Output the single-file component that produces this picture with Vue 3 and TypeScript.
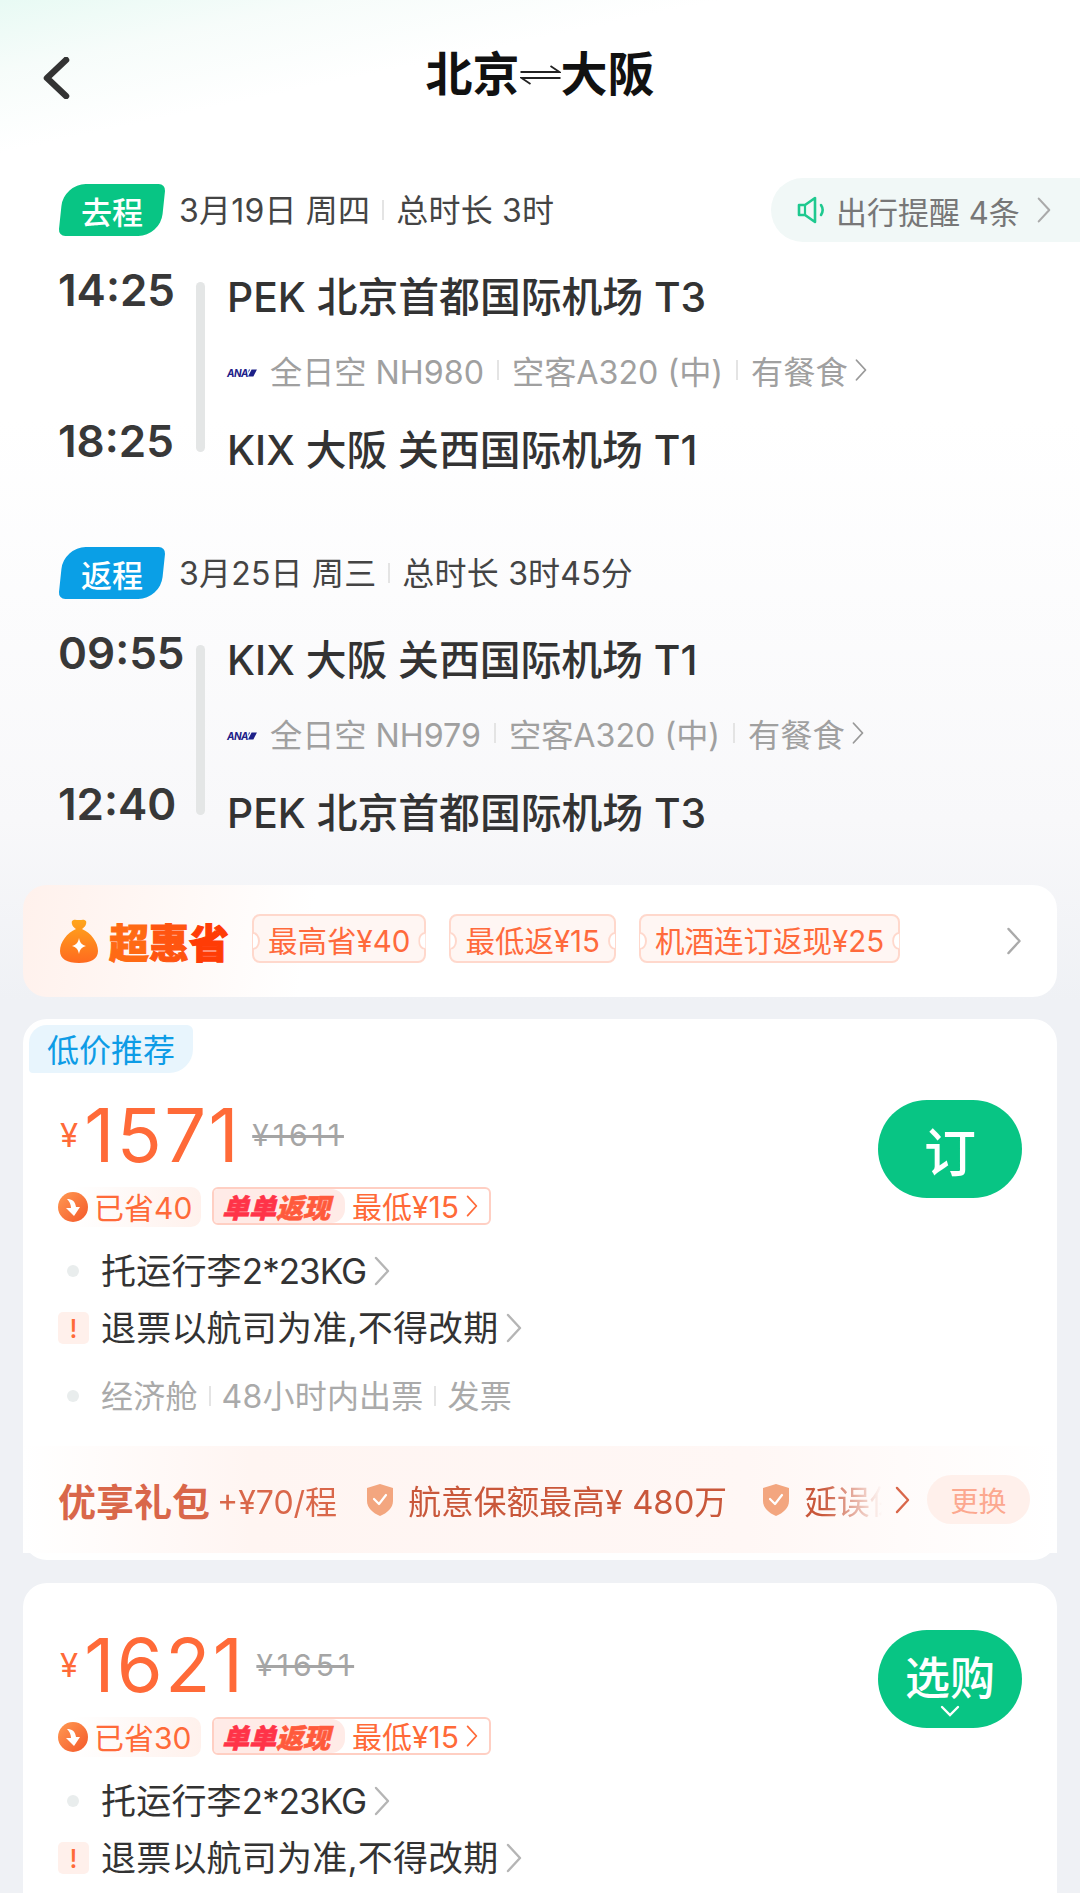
<script setup lang="ts">
interface Trip {
  tag: string;
  tone: string;
  date: string;
  total: string;
  depart: string;
  arrive: string;
  from: string;
  to: string;
  flight: string;
}

interface Offer {
  price: string;
  origin: string;
  saved: string;
  low: boolean;
  action: string;
}

const trips: Trip[] = [
  {
    tag: "去程",
    tone: "green",
    date: "3月19日 周四",
    total: "总时长 3时",
    depart: "14:25",
    arrive: "18:25",
    from: "PEK 北京首都国际机场 T3",
    to: "KIX 大阪 关西国际机场 T1",
    flight: "全日空 NH980",
  },
  {
    tag: "返程",
    tone: "blue",
    date: "3月25日 周三",
    total: "总时长 3时45分",
    depart: "09:55",
    arrive: "12:40",
    from: "KIX 大阪 关西国际机场 T1",
    to: "PEK 北京首都国际机场 T3",
    flight: "全日空 NH979",
  },
];

const offers: Offer[] = [
  { price: "1571", origin: "1611", saved: "已省40", low: true, action: "订" },
  { price: "1621", origin: "1651", saved: "已省30", low: false, action: "选购" },
];

const tickets = ["最高省¥40", "最低返¥15", "机酒连订返现¥25"];
</script>

<template>
  <div class="page">
    <svg class="defs" width="0" height="0" aria-hidden="true">
      <symbol id="chev" viewBox="0 0 16 30">
        <path d="M2 2l12 13L2 28" fill="none" stroke="currentColor" stroke-width="2.4" stroke-linecap="round" stroke-linejoin="round" />
      </symbol>
      <symbol id="shield" viewBox="0 0 28 34">
        <path d="M14 1l13 4v13c0 7-6 12-13 15C7 30 1 25 1 18V5z" fill="#f3a67f" />
        <path d="M8 16l5 5 7-9" fill="none" stroke="#fff" stroke-width="2.2" stroke-linecap="round" stroke-linejoin="round" />
      </symbol>
    </svg>

    <header class="nav">
      <svg class="back" viewBox="0 0 28 42" width="28" height="42">
        <path d="M24 3L5 21l19 18" fill="none" stroke="#333" stroke-width="6.5" stroke-linecap="round" stroke-linejoin="round" />
      </svg>
      <h1 class="title">
        北京<svg viewBox="0 0 40 20" width="41" height="20">
          <path d="M0 7h39L30 1M40 13H1l9 6" fill="none" stroke="#222" stroke-width="1.8" />
        </svg>大阪
      </h1>
    </header>

    <section v-for="(t, i) in trips" :key="t.tag" class="trip" :class="{ first: i === 0 }">
      <div class="trip-head">
        <span class="trip-tag" :class="t.tone"><b>{{ t.tag }}</b></span>
        <span class="trip-date">{{ t.date }}</span>
        <i class="sep" />
        <span class="trip-date">{{ t.total }}</span>
        <div v-if="i === 0" class="remind">
          <svg viewBox="0 0 30 30" width="30" height="30">
            <path d="M2 10h6l10-7v24l-10-7H2z" fill="none" stroke="#1ec98f" stroke-width="2.6" stroke-linejoin="round" />
            <path d="M8 10v10" stroke="#1ec98f" stroke-width="2.2" />
            <path d="M24 10c2 3 2 7 0 10" fill="none" stroke="#1ec98f" stroke-width="2.6" stroke-linecap="round" />
          </svg>
          <span>出行提醒 4条</span>
          <svg class="remind-chev"><use href="#chev" /></svg>
        </div>
      </div>
      <div class="trip-body">
        <div class="times">
          <span>{{ t.depart }}</span>
          <span>{{ t.arrive }}</span>
        </div>
        <div class="bar" />
        <div class="stops">
          <div class="stop">{{ t.from }}</div>
          <div class="flight">
            <span class="ana">
              <em>ANA</em>
              <svg viewBox="0 0 10 10" width="10" height="10">
                <path d="M4 1h6L6 9H0zM1 1h1.500L0 5z" fill="#1d2088" />
              </svg>
            </span>
            <span>{{ t.flight }}</span>
            <i class="sep" />
            <span>空客A320 (中)</span>
            <i class="sep" />
            <span>有餐食</span>
            <svg class="flight-chev"><use href="#chev" /></svg>
          </div>
          <div class="stop">{{ t.to }}</div>
        </div>
      </div>
    </section>

    <section class="promo">
      <svg viewBox="0 0 38 44" width="38" height="44">
        <defs>
          <linearGradient id="bag" x1="0.5" y1="0" x2="0.5" y2="1">
            <stop offset="0" stop-color="#ffa61c" />
            <stop offset="1" stop-color="#ff6a1f" />
          </linearGradient>
        </defs>
        <path d="M12 2c2-2 4-1 7-1s5-1 7 1c1 3-1 6-4 8 9 4 16 13 16 22 0 8-7 12-19 12S0 40 0 32c0-9 7-18 16-22-3-2-5-5-4-8z" fill="url(#bag)" />
        <path d="M19 19c1 5 3 7 7 8-4 1-6 3-7 8-1-5-3-7-7-8 4-1 6-3 7-8z" fill="#fff" />
      </svg>
      <strong class="promo-name"><span>超</span><span>惠</span><span>省</span></strong>
      <div class="tickets">
        <span v-for="n in tickets" :key="n" class="ticket">{{ n }}</span>
      </div>
      <svg class="promo-chev"><use href="#chev" /></svg>
    </section>

    <article v-for="o in offers" :key="o.price" class="offer" :class="{ tagged: o.low }">
      <span v-if="o.low" class="low-tag"><span>低价推荐</span></span>
      <div class="offer-top">
        <div>
          <div class="price">
            <span class="yen">¥</span>
            <span class="num">{{ o.price }}</span>
            <s class="origin">¥{{ o.origin }}</s>
          </div>
          <div class="badges">
            <span class="saved">
              <svg viewBox="0 0 30 30" width="30" height="30">
                <defs>
                  <linearGradient id="sv" x1="0" y1="0" x2="1" y2="1">
                    <stop offset="0" stop-color="#ff9a52" />
                    <stop offset="1" stop-color="#f4582a" />
                  </linearGradient>
                </defs>
                <circle cx="15" cy="15" r="15" fill="url(#sv)" />
                <path d="M9 7c5 0 8 2 9 8h4l-6 9-8-8h5c0-4-2-7-4-9z" fill="#fff" />
              </svg>
              <span class="saved-text">{{ o.saved }}</span>
            </span>
            <span class="cash">
              <b class="cash-name"><span>单单</span><span>返现</span></b>
              <span class="cash-val">最低¥15</span>
              <svg class="cash-chev"><use href="#chev" /></svg>
            </span>
          </div>
        </div>
        <button class="buy" :class="{ wide: !o.low }" type="button">
          <span>{{ o.action }}</span>
          <svg v-if="!o.low" viewBox="0 0 20 12" width="20" height="12">
            <path d="M2 2l8 8 8-8" fill="none" stroke="#fff" stroke-width="2.4" stroke-linecap="round" />
          </svg>
        </button>
      </div>

      <div class="rule first-rule">
        <i class="dot" />
        <span>托运行李<span class="kg">2*23KG</span></span>
        <svg class="rule-chev"><use href="#chev" /></svg>
      </div>
      <div class="rule warn">
        <i class="mark">!</i>
        <span>退票以航司为准,不得改期</span>
        <svg class="rule-chev"><use href="#chev" /></svg>
      </div>

      <template v-if="o.low">
        <div class="rule gray">
          <i class="dot" />
          <span>经济舱</span>
          <i class="sep" />
          <span>48小时内出票</span>
          <i class="sep" />
          <span>发票</span>
        </div>
        <div class="gift">
          <strong class="gift-name">优享礼包</strong>
          <div class="gift-list">
            <span class="gift-price">+¥70/程</span>
            <svg class="shield"><use href="#shield" /></svg>
            <span class="gift-item">航意保额最高¥ 480万</span>
            <svg class="shield next"><use href="#shield" /></svg>
            <span class="gift-item">延误保</span>
          </div>
          <svg class="gift-chev"><use href="#chev" /></svg>
          <span class="swap">更换</span>
        </div>
      </template>
    </article>
  </div>
</template>

<style scoped>
.page {
  width: 1080px;
  height: 1893px;
  overflow: hidden;
  font-family: Inter, "Noto Sans CJK SC", sans-serif;
  color: #333;
  background:
    linear-gradient(168deg, #e8faf4 0, rgba(243, 251, 248, 0.7) 70px, rgba(255, 255, 255, 0) 150px),
    linear-gradient(180deg, #fff 420px, #f8f8fa 820px, #eff1f5 1000px);
}

.defs {
  position: absolute;
}

.sep {
  display: block;
  width: 2px;
  height: 20px;
  background: #e4e4e4;
  flex-shrink: 0;
}

/* nav */
.nav {
  display: flex;
  align-items: center;
  justify-content: center;
  height: 148px;
  position: relative;
}

.back {
  position: absolute;
  left: 42px;
  top: 57px;
}

.title {
  margin: 0;
  font-size: 47px;
  line-height: 60px;
  font-weight: 700;
  color: #111;
  display: flex;
  align-items: center;
}

.title svg {
  margin: 2px 0 0;
}

/* trips */
.trip {
  padding-left: 58px;
  margin-bottom: 74px;
}

.trip.first {
  margin-top: 36px;
}

.trip-head {
  display: flex;
  align-items: center;
  height: 52px;
  gap: 12px;
}

.trip-tag {
  position: relative;
  width: 108px;
  height: 52px;
  margin-right: 1px;
  display: flex;
  align-items: center;
  justify-content: center;
  flex-shrink: 0;
}

.trip-tag::before {
  content: "";
  position: absolute;
  inset: 0 3px;
  border-radius: 22px 7px 22px 7px;
  transform: skewX(-6deg);
  background: #08c584;
}

.trip-tag.blue::before {
  background: #0a9fe6;
}

.trip-tag b {
  position: relative;
  font-size: 31px;
  font-weight: 500;
  color: #fff;
}

.trip-date {
  padding-bottom: 4px;
  font-size: 32px;
  letter-spacing: 0.2px;
  color: #444;
}

.remind {
  margin-left: auto;
  width: 309px;
  height: 64px;
  flex-shrink: 0;
  box-sizing: border-box;
  padding-left: 26px;
  display: flex;
  align-items: center;
  gap: 9px;
  border-radius: 32px 0 0 32px;
  background: #f1f8f7;
  font-size: 31px;
  color: #777;
}

.remind-chev {
  width: 14px;
  height: 28px;
  margin-left: 8px;
  color: #aaa;
}

.trip-body {
  display: flex;
  height: 208px;
  margin-top: 29px;
}

.times {
  width: 138px;
  height: 201px;
  display: flex;
  flex-direction: column;
  justify-content: space-between;
  font-size: 44px;
  line-height: 50px;
  font-weight: 600;
  color: #383838;
}

.bar {
  width: 9px;
  height: 170px;
  margin-top: 17px;
  border-radius: 5px;
  background: #e4e6e6;
}

.stops {
  margin-left: 22px;
  padding-top: 7px;
}

.stop {
  font-size: 40.800px;
  line-height: 50px;
  font-weight: 500;
  color: #333;
  white-space: nowrap;
}

.flight {
  height: 40px;
  margin: 28px 0 35px;
  display: flex;
  align-items: center;
  gap: 13px;
  font-size: 32.200px;
  color: #a0a0a0;
  white-space: nowrap;
}

.ana {
  display: flex;
  align-items: center;
  width: 30px;
  margin-top: 5px;
  font-size: 10px;
  font-weight: 700;
  color: #1d2088;
}

.ana em {
  letter-spacing: -0.5px;
}

.flight-chev {
  width: 12px;
  height: 24px;
  margin-left: -6px;
  color: #999;
}

/* promo */
.promo {
  margin: -25px 23px 0;
  height: 112px;
  box-sizing: border-box;
  padding-left: 37px;
  display: flex;
  align-items: center;
  border-radius: 24px;
  background: linear-gradient(100deg, #fff1ec 0, #fff 28%);
}

.promo-name {
  margin-left: 11px;
  font-size: 40px;
  font-weight: 900;
  white-space: nowrap;
}

.promo-name span {
  color: #ff6a14;
  -webkit-text-stroke: 1px #ff6a14;
}

.promo-name span:nth-child(2) {
  color: #ff5510;
  -webkit-text-stroke-color: #ff5510;
}

.promo-name span:nth-child(3) {
  color: #ff3c06;
  -webkit-text-stroke-color: #ff3c06;
}

.tickets {
  display: flex;
  gap: 23px;
  margin: -5px 0 0 23px;
}

.ticket {
  position: relative;
  height: 49px;
  box-sizing: border-box;
  padding: 0 14px;
  display: flex;
  align-items: center;
  border: 2px solid #ffd8cc;
  border-radius: 8px;
  background: #fff6f3;
  font-size: 29.500px;
  color: #ff6a3c;
}

.ticket::before,
.ticket::after {
  content: "";
  position: absolute;
  top: 50%;
  width: 10px;
  height: 14px;
  margin-top: -7px;
  border: 2px solid #ffd8cc;
  border-radius: 50%;
  background: #fff;
}

.ticket::before {
  left: -8px;
  clip-path: inset(0 0 0 50%);
}

.ticket::after {
  right: -8px;
  clip-path: inset(0 50% 0 0);
}

.promo-chev {
  width: 16px;
  height: 28px;
  margin-left: auto;
  margin-right: 35px;
  color: #aaa;
}

/* offers */
.offer {
  position: relative;
  margin: 22px 23px 0;
  box-sizing: border-box;
  padding-top: 47px;
  padding-bottom: 60px;
  border-radius: 24px;
  background: #fff;
}

.offer.tagged {
  padding-top: 81px;
  padding-bottom: 7px;
}

.offer.tagged + .offer {
  margin-top: 23px;
}

.low-tag {
  position: absolute;
  left: 6px;
  top: 6px;
  width: 164px;
  height: 48px;
  padding-bottom: 3px;
  box-sizing: border-box;
  display: flex;
  align-items: center;
  justify-content: center;
  border-radius: 18px 6px 24px 4px;
  background: #e8f5fd;
  font-size: 32px;
  color: #0e9ce6;
}

.offer-top {
  display: flex;
  justify-content: space-between;
  padding: 0 35px;
}

.price {
  display: flex;
  align-items: center;
  height: 70px;
  line-height: 70px;
}

.yen {
  margin: 0 6px 0 2px;
  font-size: 33px;
  color: #ff6a38;
}

.num {
  font-size: 74px;
  letter-spacing: 2.500px;
  color: #ff6a38;
}

.origin {
  margin-left: 11px;
  font-size: 30px;
  letter-spacing: 4px;
  color: #a5a5a5;
}

.badges {
  display: flex;
  gap: 11px;
  margin-top: 17px;
}

.saved {
  height: 40px;
  width: 143px;
  box-sizing: border-box;
  display: flex;
  align-items: center;
  gap: 6px;
  border-radius: 20px 10px 10px 20px;
  background: linear-gradient(90deg, #fff 10%, #fff1ec 100%);
  font-size: 30px;
  color: #ff6a38;
  white-space: nowrap;
}

.saved-text {
  padding-bottom: 3px;
}

.cash {
  height: 38px;
  width: 279px;
  box-sizing: border-box;
  display: flex;
  align-items: center;
  border: 2px solid #ffcfc3;
  border-radius: 6px;
  font-size: 30px;
  color: #ff6a38;
}

.cash-name {
  height: 100%;
  width: 131px;
  flex-shrink: 0;
  box-sizing: border-box;
  padding-left: 8px;
  display: flex;
  align-items: center;
  background: #ffebe7;
  border-radius: 4px 14px 14px 4px;
  font-style: italic;
  font-weight: 900;
  font-size: 27px;
}

.cash-name span {
  color: #ff3348;
  -webkit-text-stroke: 0.6px #ff3348;
}

.cash-name span:nth-child(2) {
  color: #ff5a3c;
  -webkit-text-stroke-color: #ff5a3c;
}

.cash-val {
  margin-left: 7px;
  padding-bottom: 3px;
  white-space: nowrap;
}

.cash-chev {
  width: 12px;
  height: 22px;
  margin-left: 7px;
  color: #ff6a38;
}

.buy {
  width: 144px;
  height: 98px;
  padding: 0;
  border: 0;
  border-radius: 49px;
  background: #08c584;
  color: #fff;
  font-family: inherit;
  font-size: 52px;
  font-weight: 500;
  display: flex;
  flex-direction: column;
  align-items: center;
  justify-content: center;
}

.buy.wide {
  font-size: 45px;
  line-height: 56px;
  padding-top: 10px;
}

.buy.wide svg {
  margin-top: -2px;
}

.rule {
  display: flex;
  align-items: center;
  height: 46px;
  padding-left: 35px;
  margin-top: 11px;
  font-size: 35px;
  letter-spacing: 0.2px;
  color: #333;
}

.rule > span {
  padding-bottom: 5px;
}

.first-rule {
  margin-top: 21px;
}

.kg {
  letter-spacing: -1px;
}

.rule.gray {
  margin-top: 22px;
  font-size: 32px;
  color: #aaa;
  gap: 11px;
}

.dot {
  width: 12px;
  height: 12px;
  margin: 0 22px 0 9px;
  border-radius: 50%;
  background: #e9eded;
}

.rule.gray .dot {
  margin-right: 11px;
}

.mark {
  width: 31px;
  height: 32px;
  margin-right: 12px;
  border-radius: 5px;
  background: #fff0eb;
  color: #ff6a38;
  font-style: normal;
  font-size: 26px;
  font-weight: 500;
  display: flex;
  align-items: center;
  justify-content: center;
}

.rule-chev {
  width: 16px;
  height: 30px;
  margin-left: 8px;
  color: #b5b5b5;
}

/* gift strip */
.gift {
  margin-top: 27px;
  height: 107px;
  box-sizing: border-box;
  padding: 0 27px 0 35px;
  display: flex;
  align-items: center;
  background: linear-gradient(90deg, #fff 0, #fff5f2 22%, #fff7f5 70%, #fff 100%);
}

.gift-name {
  flex-shrink: 0;
  font-size: 38px;
  font-weight: 700;
  color: #d9674a;
}

.gift-list {
  flex: 1;
  min-width: 0;
  margin-left: 7px;
  display: flex;
  align-items: center;
  white-space: nowrap;
  overflow: hidden;
  font-size: 32px;
  color: #c9573a;
  -webkit-mask-image: linear-gradient(90deg, #000 90%, transparent 99%);
  mask-image: linear-gradient(90deg, #000 90%, transparent 99%);
}

.gift-price {
  color: #d9674a;
}

.gift-item {
  font-size: 32.800px;
}

.shield {
  width: 28px;
  height: 34px;
  flex-shrink: 0;
  margin: 0 14px 0 29px;
}

.shield.next {
  margin-left: 35px;
}

.gift-chev {
  width: 15px;
  height: 28px;
  flex-shrink: 0;
  margin: 0 17px 0 6px;
  color: #d9674a;
}

.swap {
  width: 103px;
  height: 49px;
  flex-shrink: 0;
  display: flex;
  align-items: center;
  justify-content: center;
  border-radius: 25px;
  background: #fff0eb;
  font-size: 28px;
  color: #fca88f;
}
</style>
